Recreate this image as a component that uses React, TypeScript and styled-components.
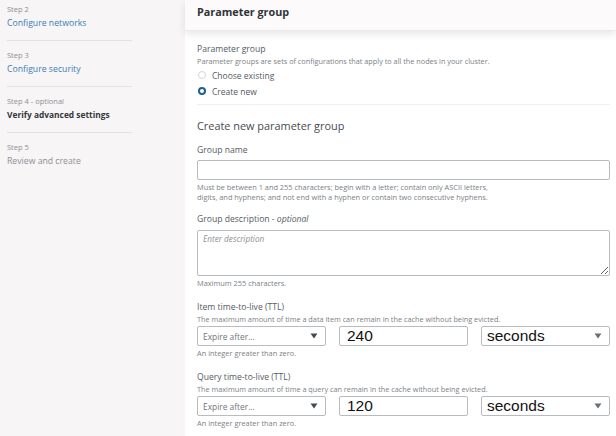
import styled, { createGlobalStyle } from "styled-components"

const GlobalStyle = createGlobalStyle`
  html, body {
    margin: 0;
    padding: 0;
    width: 616px;
    height: 436px;
    overflow: hidden;
    background: #ffffff;
  }
  * { box-sizing: border-box; }
`

const steps = [
    { step: "Step 2", title: "Configure networks", state: "link" },
    { step: "Step 3", title: "Configure security", state: "link" },
    { step: "Step 4 - optional", title: "Verify advanced settings", state: "current" },
    { step: "Step 5", title: "Review and create", state: "todo" },
]

const Caret = ({ dark }: { dark?: boolean }) => (
    <svg width="8" height="6" viewBox="0 0 8 6">
        <path d="M0.5 0.5 L7.5 0.5 L4 5.5 Z" fill={dark ? "#444b52" : "#6b7177"} />
    </svg>
)

const TtlField = ({ label, desc, value }: { label: string; desc: string; value: string }) => (
    <Field space={14}>
        <Label>{label}</Label>
        <Desc>{desc}</Desc>
        <TtlRow>
            <SelectBox>
                <SelectText>Expire after...</SelectText>
                <Caret dark />
            </SelectBox>
            <BigInput value={value} readOnly />
            <SelectBox>
                <BigText>seconds</BigText>
                <Caret />
            </SelectBox>
        </TtlRow>
        <Hint>An integer greater than zero.</Hint>
    </Field>
)

const App = () => {
    return (
        <Page>
            <GlobalStyle />
            <Sidebar>
                {steps.map((s, i) => (
                    <StepBlock key={s.step} last={i === steps.length - 1}>
                        <StepLabel>{s.step}</StepLabel>
                        <StepTitle state={s.state}>{s.title}</StepTitle>
                    </StepBlock>
                ))}
            </Sidebar>
            <Main>
                <Header>
                    <HeaderTitle>Parameter group</HeaderTitle>
                </Header>
                <Content>
                    <Label>Parameter group</Label>
                    <Desc>Parameter groups are sets of configurations that apply to all the nodes in your cluster.</Desc>
                    <RadioGroup>
                        <RadioRow>
                            <Radio checked={false} />
                            <RadioText>Choose existing</RadioText>
                        </RadioRow>
                        <RadioRow>
                            <Radio checked />
                            <RadioText>Create new</RadioText>
                        </RadioRow>
                    </RadioGroup>
                    <Divider />
                    <SubHeading>Create new parameter group</SubHeading>

                    <Field space={12}>
                        <Label>Group name</Label>
                        <TextInput readOnly />
                        <Hint>
                            Must be between 1 and 255 characters; begin with a letter; contain only ASCII letters,<br />
                            digits, and hyphens; and not end with a hyphen or contain two consecutive hyphens.
                        </Hint>
                    </Field>

                    <Field space={12}>
                        <Label>Group description - <em>optional</em></Label>
                        <TextArea placeholder="Enter description" readOnly />
                        <Hint>Maximum 255 characters.</Hint>
                    </Field>

                    <TtlField
                        label="Item time-to-live (TTL)"
                        desc="The maximum amount of time a data item can remain in the cache without being evicted."
                        value="240"
                    />
                    <TtlField
                        label="Query time-to-live (TTL)"
                        desc="The maximum amount of time a query can remain in the cache without being evicted."
                        value="120"
                    />
                </Content>
            </Main>
        </Page>
    )
}

const Page = styled.div`
display: flex;
width: 616px;
height: 436px;
font-family: 'Open Sans', 'Noto Sans', sans-serif;
color: #545b64;
`

const Sidebar = styled.div`
width: 185px;
flex-shrink: 0;
background: #f7f5f5;
padding: 3px 0 0 7px;
`

const StepBlock = styled.div<{ last?: boolean }>`
width: 125px;
padding-bottom: ${p => (p.last ? 0 : 10)}px;
margin-bottom: 8px;
border-bottom: ${p => (p.last ? "none" : "1px solid #e3e1e1")};
`

const StepLabel = styled.div`
font-size: 7.5px;
line-height: 12px;
color: #8d9096;
`

const StepTitle = styled.div<{ state: string }>`
font-size: ${p => (p.state === "current" ? 8.4 : 8.7)}px;
line-height: 14px;
white-space: nowrap;
margin-top: 1px;
font-weight: ${p => (p.state === "current" ? 700 : 400)};
color: ${p => (p.state === "link" ? "#3b7db8" : p.state === "current" ? "#33383d" : "#8d9096")};
`

const Main = styled.div`
flex: 1;
background: #ffffff;
display: flex;
flex-direction: column;
`

const Header = styled.div`
height: 31px;
background: #fcfafa;
padding: 4px 12px 0;
box-shadow: 0 3px 8px rgba(0, 0, 0, 0.1);
border-bottom: 1px solid #ecebeb;
position: relative;
`

const HeaderTitle = styled.div`
font-size: 10.8px;
line-height: 16px;
font-weight: 700;
color: #2f3439;
`

const Content = styled.div`
padding: 13px 6px 0 12px;
display: flex;
flex-direction: column;
`

const Label = styled.div`
font-size: 8.6px;
line-height: 11px;
color: #545b64;
white-space: nowrap;
em {
    font-style: italic;
}
`

const Desc = styled.div`
font-size: 7.3px;
line-height: 10px;
color: #7b8186;
margin-top: 1px;
white-space: nowrap;
`

const RadioGroup = styled.div`
display: flex;
flex-direction: column;
margin-top: 1px;
`

const RadioRow = styled.div`
display: flex;
align-items: center;
gap: 6px;
height: 16px;
padding-left: 1px;
`

const Radio = styled.span<{ checked: boolean }>`
width: 8px;
height: 8px;
border-radius: 50%;
box-sizing: border-box;
border: ${p => (p.checked ? "2.5px solid #1f5f92" : "1px solid #d3d5d8")};
background: #ffffff;
`

const RadioText = styled.span`
font-size: 8.5px;
color: #545b64;
`

const Divider = styled.div`
height: 1px;
background: #f1f0f0;
margin: 5px 0 0;
`

const SubHeading = styled.div`
font-size: 10.9px;
line-height: 15px;
color: #454b51;
margin-top: 13px;
`

const Field = styled.div<{ space: number }>`
display: flex;
flex-direction: column;
margin-top: ${p => p.space}px;
`

const TextInput = styled.input`
height: 20px;
margin-top: 4px;
border: 1px solid #b9bcbf;
border-radius: 2px;
background: #ffffff;
outline: none;
`

const TextArea = styled.textarea`
height: 46px;
margin-top: 5px;
border: 1px solid #b9bcbf;
border-radius: 2px;
padding: 2px 5px;
font-family: 'Open Sans', 'Noto Sans', sans-serif;
font-size: 8.2px;
font-style: italic;
resize: vertical;
outline: none;
&::placeholder {
    color: #8d9196;
}
`

const Hint = styled.div`
font-size: 7.4px;
line-height: 10px;
color: #7b8186;
margin-top: 2px;
white-space: nowrap;
`

const TtlRow = styled.div`
display: grid;
grid-template-columns: repeat(3, 1fr);
column-gap: 13px;
margin-top: 2px;
`

const SelectBox = styled.div`
height: 20px;
border: 1px solid #b9bcbf;
border-radius: 2px;
display: flex;
align-items: center;
justify-content: space-between;
padding: 0 7px 0 5px;
background: #ffffff;
`

const SelectText = styled.span`
font-size: 8.4px;
color: #6f757b;
`

const BigText = styled.span`
font-family: 'Liberation Sans', Arial, sans-serif;
font-size: 15.5px;
color: #111111;
`

const BigInput = styled.input`
height: 20px;
border: 1px solid #b9bcbf;
border-radius: 2px;
padding: 0 7px;
font-family: 'Liberation Sans', Arial, sans-serif;
font-size: 15.5px;
color: #111111;
outline: none;
min-width: 0;
`

export default App
